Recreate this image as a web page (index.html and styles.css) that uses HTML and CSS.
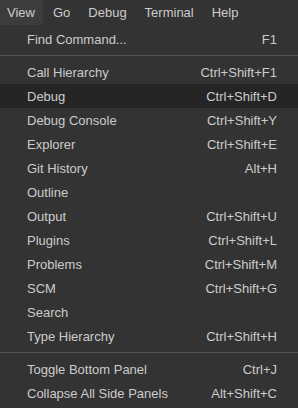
FILE: index.html
```html
<!DOCTYPE html>
<html lang="en">
<head>
  <meta charset="UTF-8">
  <title>View menu</title>
  <link rel="stylesheet" href="styles.css">
</head>
<body>

  <div class="menubar">
    <span class="menubar-item active">View</span>
    <span class="menubar-item">Go</span>
    <span class="menubar-item">Debug</span>
    <span class="menubar-item">Terminal</span>
    <span class="menubar-item">Help</span>
  </div>

  <div class="menu">
    <div class="menu-item"><span>Find Command...</span><span class="key">F1</span></div>
    <div class="separator"></div>
    <div class="menu-item"><span>Call Hierarchy</span><span class="key">Ctrl+Shift+F1</span></div>
    <div class="menu-item selected"><span>Debug</span><span class="key">Ctrl+Shift+D</span></div>
    <div class="menu-item"><span>Debug Console</span><span class="key">Ctrl+Shift+Y</span></div>
    <div class="menu-item"><span>Explorer</span><span class="key">Ctrl+Shift+E</span></div>
    <div class="menu-item"><span>Git History</span><span class="key">Alt+H</span></div>
    <div class="menu-item"><span>Outline</span><span class="key"></span></div>
    <div class="menu-item"><span>Output</span><span class="key">Ctrl+Shift+U</span></div>
    <div class="menu-item"><span>Plugins</span><span class="key">Ctrl+Shift+L</span></div>
    <div class="menu-item"><span>Problems</span><span class="key">Ctrl+Shift+M</span></div>
    <div class="menu-item"><span>SCM</span><span class="key">Ctrl+Shift+G</span></div>
    <div class="menu-item"><span>Search</span><span class="key"></span></div>
    <div class="menu-item"><span>Type Hierarchy</span><span class="key">Ctrl+Shift+H</span></div>
    <div class="separator"></div>
    <div class="menu-item"><span>Toggle Bottom Panel</span><span class="key">Ctrl+J</span></div>
    <div class="menu-item"><span>Collapse All Side Panels</span><span class="key">Alt+Shift+C</span></div>
  </div>

</body>
</html>
```

FILE: styles.css
```css
body {
  margin: 0;
  background-color: #333333;
  font-family: "Liberation Sans", Arial, sans-serif;
  font-size: 13px;
  color: #cccccc;
}

.menubar {
  display: flex;
  height: 25px;
  background-color: #333333;
}

.menubar-item {
  display: flex;
  align-items: center;
  padding: 0 9px;
}

.menubar-item:first-child {
  padding-left: 7px;
  padding-right: 8px;
}

.menubar-item:nth-child(2) {
  margin-left: 1px;
}

.menubar-item.active {
  background-color: #3c3c3c;
}

.menu {
  background-color: #333333;
  padding-top: 2px;
}

.menu-item {
  display: flex;
  justify-content: space-between;
  align-items: center;
  height: 24px;
  padding: 0 21px 0 27px;
}

.menu-item.selected {
  background-color: #252526;
}

.separator {
  height: 1px;
  margin: 4px 0;
  background-color: #555555;
}
```
